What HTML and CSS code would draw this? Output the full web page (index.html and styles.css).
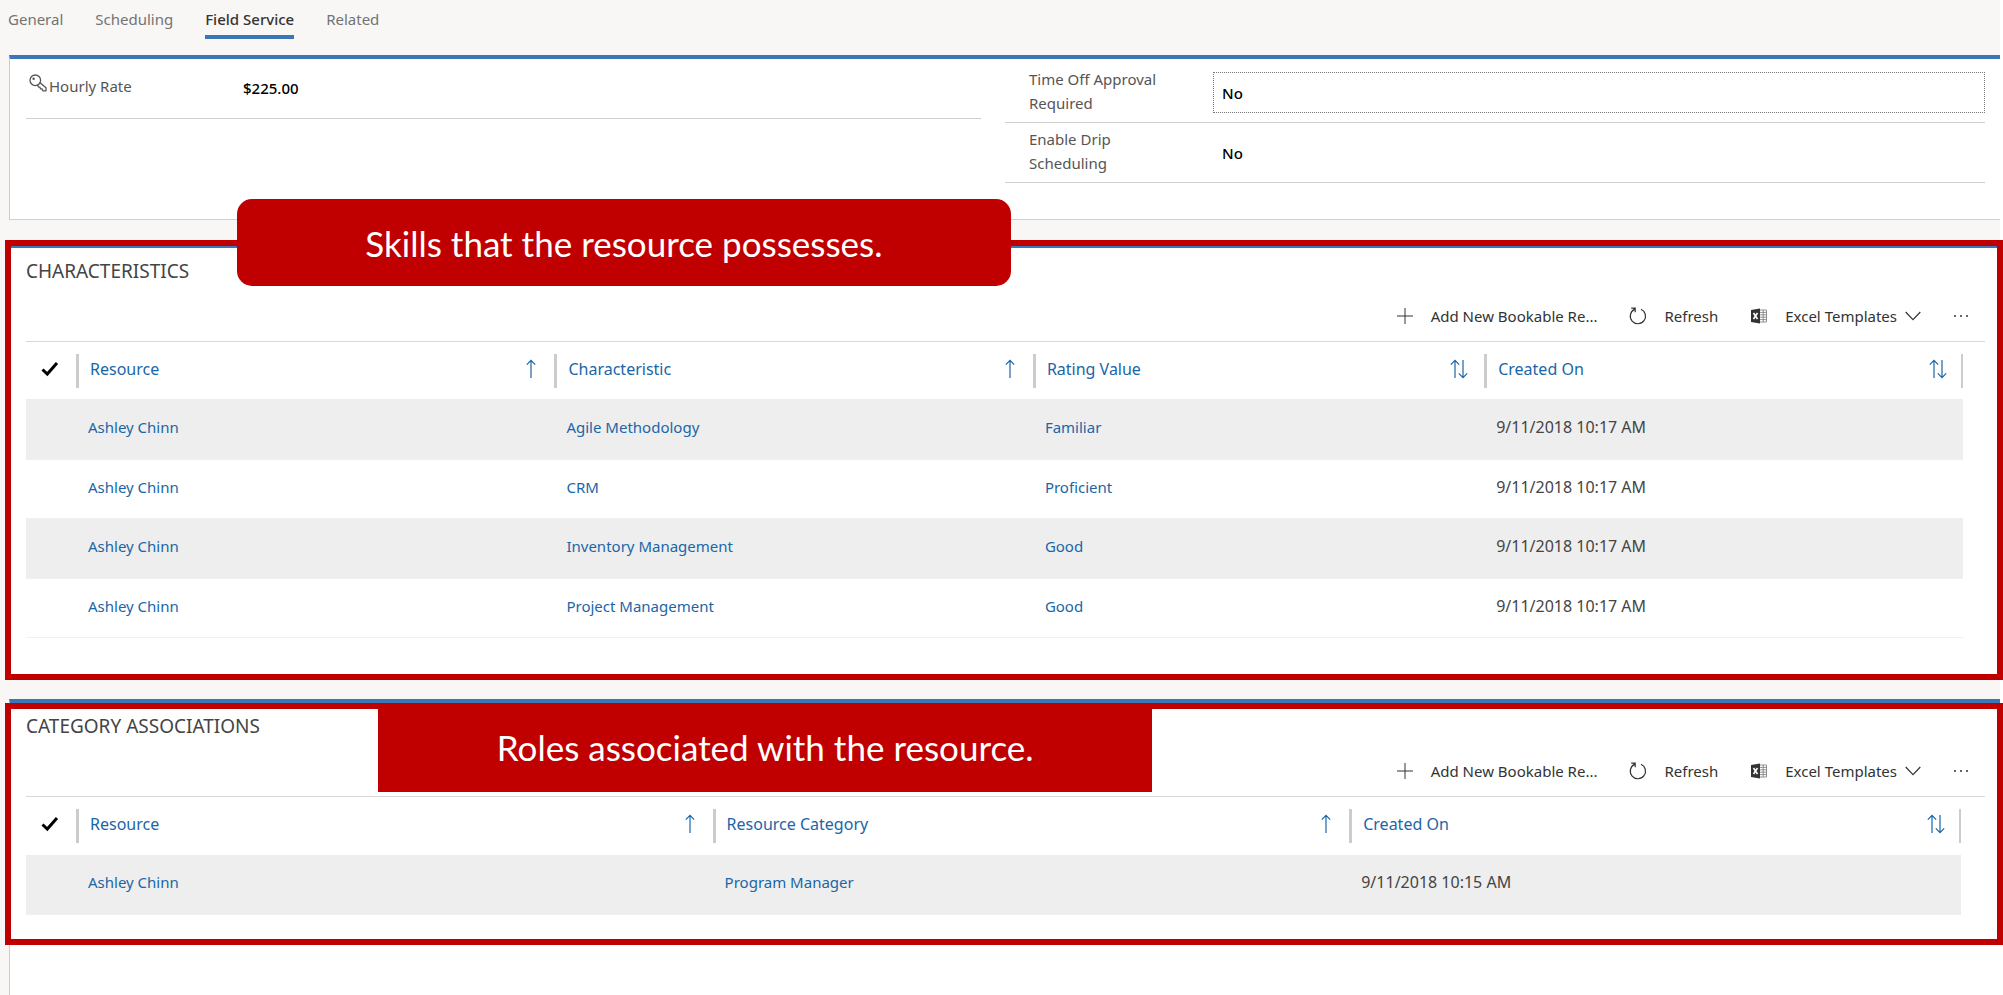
FILE: index.html
```html
<!DOCTYPE html>
<html lang="en">
<head>
<meta charset="utf-8">
<title>Bookable Resource - Field Service</title>
<link rel="stylesheet" href="styles.css">
</head>
<body>
<svg class="sprite" aria-hidden="true">
  <symbol id="key" viewBox="0 0 18 18"><g fill="none" stroke="currentColor" stroke-width="1.3" stroke-linejoin="round"><path d="M10.8 8.4 17 13.8V16.8H13.9L13 14.9H11.6L10.8 13.1H9.8L8.2 11"/><circle cx="6.3" cy="6.3" r="5.3"/></g><circle cx="4.6" cy="4.8" r="1.2" fill="currentColor"/></symbol>
  <symbol id="plus" viewBox="0 0 18 18"><path d="M9 1V17M1 9H17" fill="none" stroke="currentColor"/></symbol>
  <symbol id="refresh" viewBox="0 0 18 18"><path d="M5.4 2.4A7.6 7.6 0 1 0 12 2.2M2.2 1.2H6.2V5.2M6.2 1.2 2.6 4.8" fill="none" stroke="currentColor" stroke-width="1.2"/></symbol>
  <symbol id="excel" viewBox="0 0 18 18"><path d="M1 3 10 1.5V16.5L1 15Z" fill="#333"/><path d="M3.5 6 7.5 12M7.5 6 3.5 12" stroke="#fff" stroke-width="1.6"/><path d="M10 3H16.5V15H10M10 5.4H16.5M10 7.8H16.5M10 10.2H16.5M10 12.6H16.5M13.2 3V15" fill="none" stroke="#777" stroke-width=".8"/></symbol>
  <symbol id="chevron" viewBox="0 0 16 10"><path d="M.7 1 8 8.6 15.3 1" fill="none" stroke="currentColor" stroke-width="1.2"/></symbol>
  <symbol id="dots" viewBox="0 0 16 4"><g fill="currentColor"><circle cx="2" cy="2" r="1"/><circle cx="8" cy="2" r="1"/><circle cx="14" cy="2" r="1"/></g></symbol>
  <symbol id="check" viewBox="0 0 18 16"><path d="M1.5 8.5 6.3 13 16 2" fill="none" stroke="currentColor" stroke-width="3"/></symbol>
  <symbol id="up" viewBox="0 0 10 20"><path d="M5 19V1.5M.8 5.6 5 1.4 9.2 5.6" fill="none" stroke="currentColor" stroke-width="1.2"/></symbol>
  <symbol id="updown" viewBox="0 0 18 20"><path d="M5 19V1.5M.8 5.6 5 1.4 9.2 5.6M13 1V18.5M8.8 14.4 13 18.6 17.2 14.4" fill="none" stroke="currentColor" stroke-width="1.2"/></symbol>
</svg>
<div class="page">
  <nav class="tabs" aria-label="Form tabs">
    <button class="tab">General</button>
    <button class="tab">Scheduling</button>
    <button class="tab tab-active" aria-current="page">Field Service</button>
    <button class="tab">Related</button>
  </nav>

  <main class="panels">
    <section class="panel details">
      <div class="column">
        <div class="field field-rate">
          <label class="field-label" for="rate"><svg class="icon-key"><use href="#key"/></svg>Hourly Rate</label>
          <input class="field-value" id="rate" type="text" value="$225.00">
        </div>
      </div>
      <div class="column">
        <div class="field">
          <label class="field-label" for="timeoff">Time Off Approval Required</label>
          <select class="field-value field-focus" id="timeoff"><option>No</option><option>Yes</option></select>
        </div>
        <div class="field">
          <label class="field-label" for="drip">Enable Drip Scheduling</label>
          <select class="field-value" id="drip"><option>No</option><option>Yes</option></select>
        </div>
      </div>
    </section>

    <section class="panel characteristics">
      <div class="framed">
        <h2 class="title">CHARACTERISTICS</h2>
        <div class="toolbar">
          <button class="command"><svg class="icon"><use href="#plus"/></svg>Add New Bookable Re...</button>
          <button class="command"><svg class="icon"><use href="#refresh"/></svg>Refresh</button>
          <button class="command"><svg class="icon"><use href="#excel"/></svg>Excel Templates<svg class="icon-chevron"><use href="#chevron"/></svg></button>
          <button class="command" aria-label="More commands"><svg class="icon-dots"><use href="#dots"/></svg></button>
        </div>
        <table class="grid">
          <colgroup><col class="col-check"><col class="col-wide"><col class="col-wide"><col class="col-rating"><col></colgroup>
          <thead>
            <tr>
              <th><button class="select-all" aria-label="Select all"><svg class="icon-check"><use href="#check"/></svg></button></th>
              <th><button class="sort">Resource<svg class="icon-up"><use href="#up"/></svg></button></th>
              <th><button class="sort">Characteristic<svg class="icon-up"><use href="#up"/></svg></button></th>
              <th><button class="sort">Rating Value<svg class="icon-updown"><use href="#updown"/></svg></button></th>
              <th><button class="sort sort-last">Created On<svg class="icon-updown"><use href="#updown"/></svg></button></th>
            </tr>
          </thead>
          <tbody>
            <tr><td></td><td><a href="#">Ashley Chinn</a></td><td><a href="#">Agile Methodology</a></td><td><a href="#">Familiar</a></td><td class="date">9/11/2018 10:17 AM</td></tr>
            <tr><td></td><td><a href="#">Ashley Chinn</a></td><td><a href="#">CRM</a></td><td><a href="#">Proficient</a></td><td class="date">9/11/2018 10:17 AM</td></tr>
            <tr><td></td><td><a href="#">Ashley Chinn</a></td><td><a href="#">Inventory Management</a></td><td><a href="#">Good</a></td><td class="date">9/11/2018 10:17 AM</td></tr>
            <tr><td></td><td><a href="#">Ashley Chinn</a></td><td><a href="#">Project Management</a></td><td><a href="#">Good</a></td><td class="date">9/11/2018 10:17 AM</td></tr>
          </tbody>
        </table>
        <p class="callout callout-skills">Skills that the resource possesses.</p>
      </div>
    </section>

    <section class="panel categories">
      <div class="framed">
        <h2 class="title">CATEGORY ASSOCIATIONS</h2>
        <div class="toolbar">
          <button class="command"><svg class="icon"><use href="#plus"/></svg>Add New Bookable Re...</button>
          <button class="command"><svg class="icon"><use href="#refresh"/></svg>Refresh</button>
          <button class="command"><svg class="icon"><use href="#excel"/></svg>Excel Templates<svg class="icon-chevron"><use href="#chevron"/></svg></button>
          <button class="command" aria-label="More commands"><svg class="icon-dots"><use href="#dots"/></svg></button>
        </div>
        <table class="grid">
          <colgroup><col class="col-check"><col class="col-third"><col class="col-third"><col></colgroup>
          <thead>
            <tr>
              <th><button class="select-all" aria-label="Select all"><svg class="icon-check"><use href="#check"/></svg></button></th>
              <th><button class="sort">Resource<svg class="icon-up"><use href="#up"/></svg></button></th>
              <th><button class="sort">Resource Category<svg class="icon-up"><use href="#up"/></svg></button></th>
              <th><button class="sort sort-last">Created On<svg class="icon-updown"><use href="#updown"/></svg></button></th>
            </tr>
          </thead>
          <tbody>
            <tr><td></td><td><a href="#">Ashley Chinn</a></td><td><a href="#">Program Manager</a></td><td class="date">9/11/2018 10:15 AM</td></tr>
          </tbody>
        </table>
        <p class="callout callout-roles">Roles associated with the resource.</p>
      </div>
    </section>
  </main>
</div>
</body>
</html>
```
FILE: styles.css
```css
* { box-sizing: border-box; }

body {
  margin: 0;
  background: #fff;
  color: #444;
  font-family: "Noto Sans", "Open Sans", sans-serif;
  font-size: 15px;
}

button, input, select {
  margin: 0;
  padding: 0;
  border: 0;
  background: none;
  color: inherit;
  font: inherit;
}

svg { flex: none; }
.sprite { position: absolute; width: 0; height: 0; }

.page {
  display: flex;
  flex-direction: column;
  min-height: 100vh;
  margin-right: 3px;
  background: #f8f7f6;
}

/* Form tabs */
.tabs {
  display: flex;
  gap: 32px;
  height: 55px;
  padding-left: 8px;
  align-items: flex-start;
}
.tab {
  height: 39px;
  padding-top: 2px;
  border-bottom: 4px solid transparent;
  color: #737373;
}
.tab-active {
  border-color: #3b76b7;
  color: #333;
  font-weight: 500;
}

/* Panels */
.panels {
  display: flex;
  flex: 1;
  flex-direction: column;
  padding-left: 9px;
}
.panel {
  border-top: 4px solid #3b76b7;
  border-left: 1px solid #ccc;
  background: #fff;
}

.details {
  display: grid;
  grid-template-columns: 955fr 980fr;
  gap: 24px;
  margin-bottom: 24px;
  padding: 4px 15px 36px 16px;
  border-bottom: 1px solid #d0d0d0;
}
.field {
  display: grid;
  grid-template-columns: 208px 1fr;
  align-items: center;
  height: 60px;
  border-bottom: 1px solid #d0d0d0;
}
.column .field-rate {
  height: 56px;
  padding-bottom: 6px;
}
.field-label {
  width: 184px;
  padding: 0 0 3px 24px;
  color: #555;
  line-height: 24px;
}
.field-rate .field-label {
  display: flex;
  gap: 2px;
  padding-left: 3px;
}
.icon-key { width: 18px; height: 18px; }
.field-value {
  width: 100%;
  height: 41px;
  padding: 0 8px;
  border: 1px solid transparent;
  color: #000;
  font-weight: 500;
  appearance: none;
}
.field-focus { border: 1px dotted #777; }

/* Sub-grid blocks with a highlight frame over them */
.framed {
  position: relative;
  padding: 0 15px 0 16px;
}
.framed::after {
  content: "";
  position: absolute;
  inset: 0 -3px 0 -5px;
  border: 6px solid #c00000;
  pointer-events: none;
}
.characteristics .framed { padding-bottom: 42px; }
.characteristics .framed::after { top: -8px; }
.categories { flex: 1; margin-top: 19px; }
.categories .framed { padding-bottom: 30px; }

.title {
  height: 47px;
  margin: 0;
  padding-top: 7px;
  color: #444;
  font-size: 19px;
  font-weight: 400;
  line-height: 32px;
}
.toolbar {
  display: flex;
  justify-content: flex-end;
  gap: 32px;
  height: 47px;
  padding-right: 16px;
  border-bottom: 1px solid #d8d8d8;
}
.command {
  display: flex;
  align-items: center;
  gap: 17px;
  height: 42px;
  color: #333;
}
.icon { width: 18px; height: 18px; }
.icon-chevron { width: 16px; height: 10px; margin-left: -9px; }
.icon-dots { width: 16px; height: 4px; }

.grid {
  width: calc(100% - 22px);
  border-collapse: collapse;
  table-layout: fixed;
}
.categories .grid { width: calc(100% - 24px); }
.col-check { width: 50px; }
.col-wide { width: 24.7%; }
.col-rating { width: 23.3%; }
.col-third { width: 32.9%; }

.grid th { height: 57px; padding: 0; font-weight: 400; }
.categories .grid th { height: 58px; }
.grid td {
  height: 59px;
  padding: 0 0 4px 12px;
  border-bottom: 1px solid #f0f0f0;
}
.grid tbody tr:nth-child(odd) { background: #eee; }
.grid tbody tr:nth-child(odd) td { height: 60px; }
.grid .date { font-size: 16px; }
.grid a { color: #1a66a8; text-decoration: none; }

.sort {
  display: flex;
  justify-content: space-between;
  align-items: center;
  width: 100%;
  height: 34px;
  padding: 0 16px 3px 11px;
  border-left: 3px solid #ccc;
  color: #1a66a8;
  font-size: 16px;
}
.sort-last { padding-right: 14px; border-right: 2px solid #ccc; }
.icon-up { width: 10px; height: 20px; margin-right: 2px; }
.icon-updown { width: 18px; height: 20px; }
.select-all {
  display: flex;
  padding: 0 0 3px 15px;
  color: #000;
}
.icon-check { width: 18px; height: 16px; }

/* Callouts */
.callout {
  position: absolute;
  z-index: 1;
  display: flex;
  align-items: center;
  justify-content: center;
  width: 38.9%;
  height: 87px;
  margin: 0;
  background: #c00000;
  color: #fff;
  font-family: Lato, sans-serif;
  font-size: 35px;
}
.callout-skills { top: -49px; left: 11.4%; border-radius: 15px; }
.callout-roles { top: 0; left: 18.5%; height: 89px; }
```
